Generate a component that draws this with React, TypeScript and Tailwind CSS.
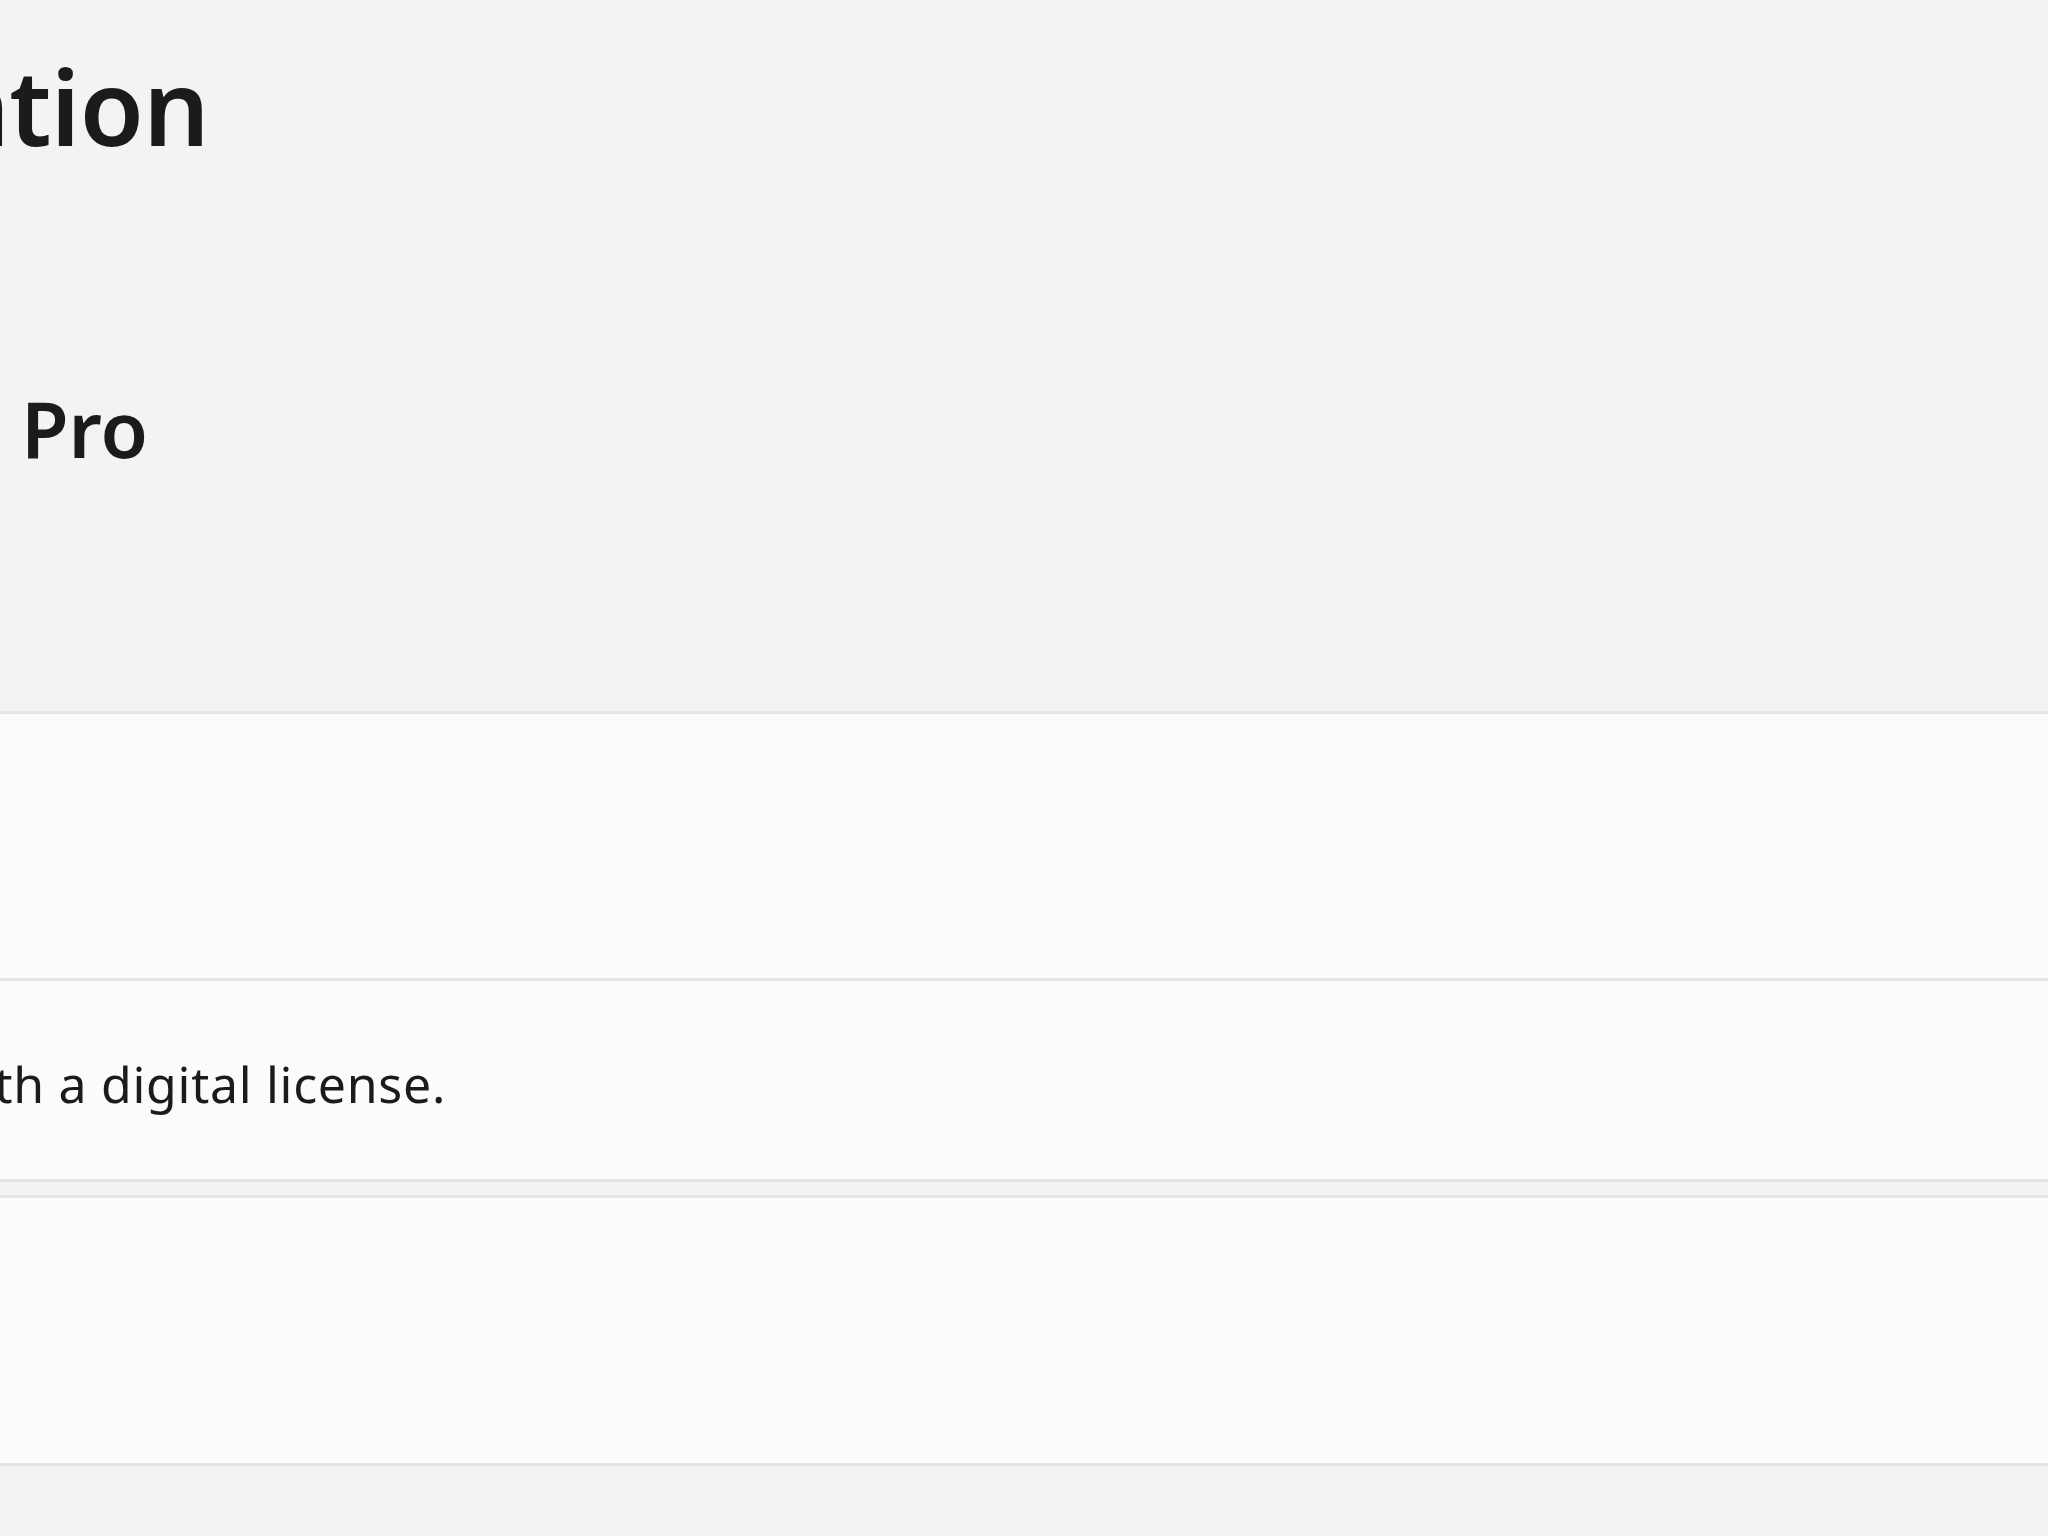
import React from "react";

export default function App() {
  return (
    <div className="w-[2048px] h-[1536px] overflow-hidden bg-[#f3f3f3] text-[#1b1b1b] font-['Noto_Sans','Open_Sans',sans-serif]">
      <div className="flex flex-col pt-[54px]">
        <div className="flex justify-end w-[209px] h-[104px]">
          <h1 className="whitespace-nowrap text-[104px] leading-[104px] font-semibold tracking-[-0.6px] shrink-0">
            Activation
          </h1>
        </div>
        <div className="flex justify-end w-[148px] h-[77px] mt-[232px]">
          <div className="whitespace-nowrap text-[77px] leading-[77px] font-semibold shrink-0">
            Windows 11 Pro
          </div>
        </div>

        <div className="mt-[244px] bg-[#fbfbfb] border-y-[3px] border-[#e5e5e5]">
          <div className="h-[264px]" />
          <div className="h-[3px] bg-[#e5e5e5]" />
          <div className="h-[198px] pt-[78px]">
            <div className="flex justify-end w-[446px] h-[50px]">
              <p className="whitespace-nowrap text-[50px] leading-[50px] tracking-[0.7px] shrink-0">
                Windows is activated with a digital license.
              </p>
            </div>
          </div>
        </div>

        <div className="mt-[13px] bg-[#fbfbfb] border-y-[3px] border-[#e5e5e5] h-[271px]" />
      </div>
    </div>
  );
}
